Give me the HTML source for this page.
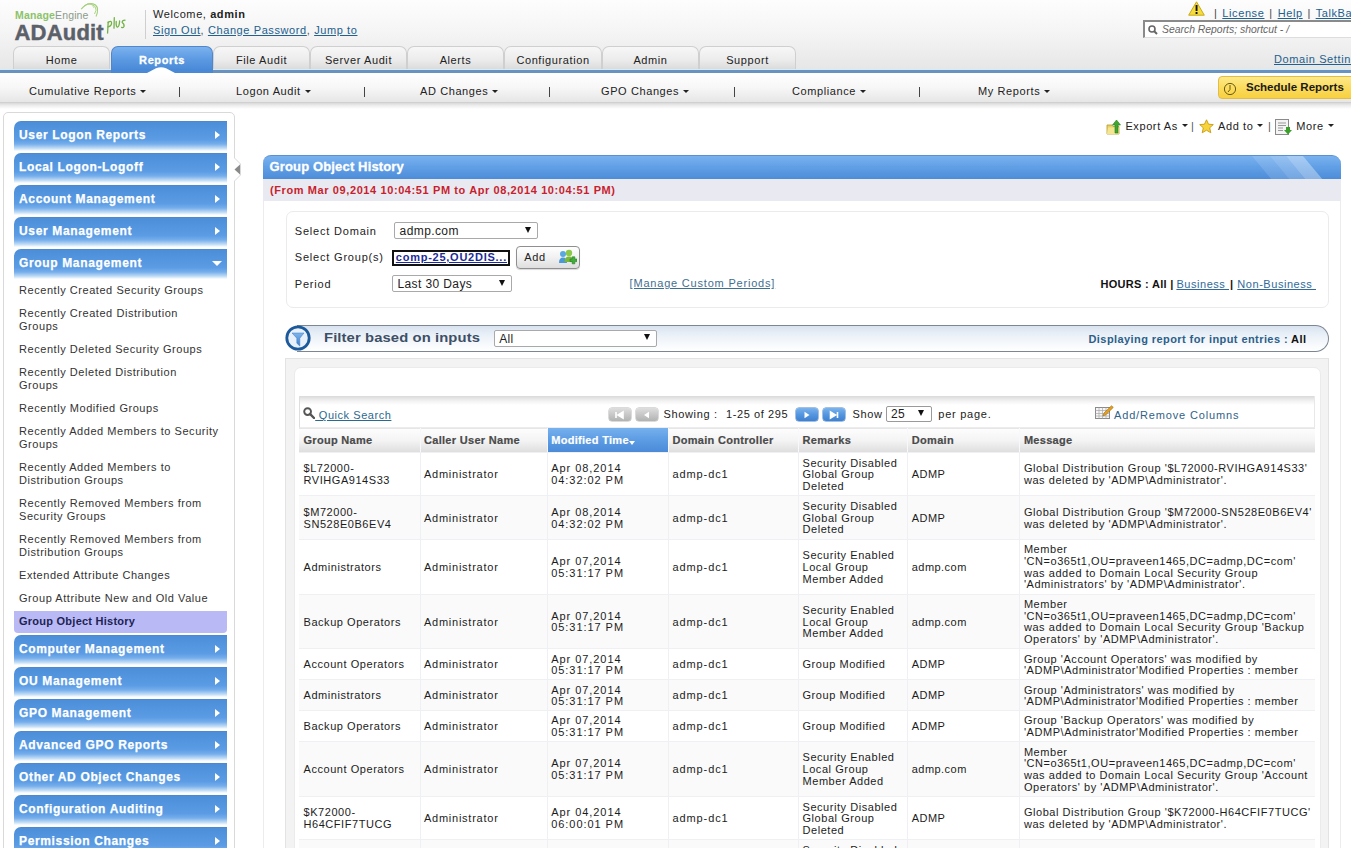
<!DOCTYPE html>
<html><head><meta charset="utf-8">
<style>
*{box-sizing:border-box;}
html,body{margin:0;padding:0;}
body{width:1351px;height:848px;overflow:hidden;position:relative;background:#fff;font-family:"Liberation Sans",sans-serif;color:#222;}
.a{position:absolute;white-space:nowrap;}
.t{position:absolute;white-space:nowrap;font-size:11px;line-height:12px;letter-spacing:0.6px;color:#222;}
.lnk{color:#22608e;text-decoration:underline;}
/* header */
#hdr{position:absolute;left:0;top:0;width:1351px;height:70px;background:linear-gradient(#fdfdfd 0%,#f5f5f5 45%,#e6e6e6 100%);}
#bline{position:absolute;left:0;top:69px;width:1351px;height:4px;background:#6892c0;border-top:1px solid #d4ecf6;}
#sub{position:absolute;left:0;top:73px;width:1351px;height:30px;background:linear-gradient(#ffffff 0%,#f7f7f7 50%,#e6e6e6 100%);border-bottom:1px solid #d0d0d0;}
#subsh{position:absolute;left:0;top:103px;width:1351px;height:6px;background:linear-gradient(#d9d9d9,#ececec 40%,#ffffff);}
.tab{position:absolute;top:46px;height:24px;width:97px;border:1px solid #cfcfcf;border-bottom:none;border-radius:7px 7px 0 0;background:linear-gradient(#f7f7f7 0%,#ececec 55%,#dadada 100%);font-size:11px;line-height:12px;text-align:center;padding-top:7px;color:#222;letter-spacing:0.6px;}
.tab.on{background:linear-gradient(#7cb2ee 0%,#5d9be3 50%,#4a89d6 100%);border-color:#4f86cc;color:#fff;font-weight:bold;height:24px;-webkit-text-stroke:0.3px #fff;}
.sn{position:absolute;top:85px;font-size:11px;line-height:12px;color:#222;letter-spacing:0.6px;white-space:nowrap;}
.car{display:inline-block;width:0;height:0;border-left:3px solid transparent;border-right:3px solid transparent;border-top:3px solid #222;vertical-align:middle;margin-left:4px;position:relative;top:-1px;}
.sep{position:absolute;top:87px;width:1.2px;height:10px;background:#444;}
/* sidebar */
#side{position:absolute;left:3px;top:112px;width:232px;height:760px;border:1px solid #d9d9d9;border-radius:5px 5px 0 0;background:#fff;}
.btn{position:absolute;left:14px;width:213px;height:32px;border-radius:7px 0 0 0;background:linear-gradient(#4a84c8 0px,#4d8ed8 1px,#5496df 35%,#5b9ce4 58%,#76aeeb 72%,#bedbf5 85%,#ffffff 94%,#ffffff 100%);}
.btn span{position:absolute;left:5px;top:8px;font-size:12px;line-height:12px;font-weight:bold;color:#fff;letter-spacing:0.65px;-webkit-text-stroke:0.25px #fff;}
.btn i{position:absolute;left:201px;top:10px;width:0;height:0;border-top:4.5px solid transparent;border-bottom:4.5px solid transparent;border-left:5px solid #fff;}
.btn i.dn{left:198px;top:12px;border-left:5px solid transparent;border-right:5px solid transparent;border-top:5px solid #fff;border-bottom:none;}
.si{position:absolute;left:19px;font-size:11px;line-height:13px;color:#333;letter-spacing:0.55px;white-space:nowrap;}
</style></head>
<body>
<div id="hdr"></div>
<!-- logo -->
<div class="a" style="left:15px;top:9px;font-size:10.5px;line-height:12px;letter-spacing:0.15px;"><span style="color:#8cc36a;font-weight:bold;">Manage</span><span style="color:#8d9b8a;">Engine</span></div>
<svg class="a" style="left:78px;top:0px;" width="24" height="22" viewBox="0 0 24 22"><path d="M3.2 9.2 Q10 1 17.5 5 Q21.5 8.5 18 16.5" stroke="#a3cf78" stroke-width="1.1" fill="none"/><path d="M6 6 Q12 1.8 17 6.5 Q19.5 10 16.5 14" stroke="#a3cf78" stroke-width="0.9" fill="none"/><path d="M9 4 Q14 3 16 8" stroke="#b5d890" stroke-width="0.8" fill="none"/></svg>
<div class="a" style="left:14.5px;top:20.5px;font-size:22px;line-height:24px;font-weight:bold;color:#5b6069;letter-spacing:0.2px;-webkit-text-stroke:0.45px #5b6069;">ADAudit</div>
<svg class="a" style="left:104px;top:15px;" width="24" height="20" viewBox="0 0 24 20"><g stroke="#72b244" stroke-width="1.3" fill="none" stroke-linecap="round"><path d="M4.2 6.8 L3.6 18"/><path d="M4.1 7.5 Q7.5 5.2 7.6 8 Q7.5 11 4 12"/><path d="M10.3 2.6 L10 13.2"/><path d="M12.2 6.5 Q11.8 12.5 13.8 12 Q15.3 11.4 15.6 6"/><path d="M21 5.2 Q18 5.2 18.2 7.5 Q20.5 9 20 11.5 Q19 13.2 17.6 12.4"/></g></svg>
<div class="a" style="left:145px;top:10px;width:1px;height:29px;background:#cfcfcf;"></div>
<div class="t" style="left:153px;top:8px;">Welcome, <b>admin</b></div>
<div class="t" style="left:153px;top:24px;color:#555;"><span class="lnk">Sign Out</span>, <span class="lnk">Change Password</span>, <span class="lnk">Jump to</span></div>

<!-- right header -->
<svg class="a" style="left:1188px;top:1px;" width="17" height="15" viewBox="0 0 17 15"><path d="M8.5 0.8 L16.3 14.2 L0.7 14.2 Z" fill="#f5dc3c" stroke="#c8a818" stroke-width="1" stroke-linejoin="round"/><rect x="7.6" y="4" width="1.9" height="6" fill="#111"/><rect x="7.6" y="11" width="1.9" height="2" fill="#111"/></svg>
<div class="t" style="left:1214px;top:7px;color:#444;word-spacing:1.2px;">| <span class="lnk">License</span> | <span class="lnk">Help</span> | <span class="lnk">TalkBack</span></div>
<div class="a" style="left:1143px;top:20px;width:220px;height:18px;background:#fff;border-top:2px solid #8a8a8a;border-left:2px solid #8a8a8a;border-bottom:1px solid #ddd;"></div>
<svg class="a" style="left:1148px;top:25px;" width="10" height="10" viewBox="0 0 10 10"><circle cx="4" cy="4" r="3" stroke="#666" stroke-width="1.6" fill="none"/><path d="M6 6 L9 9" stroke="#666" stroke-width="2"/></svg>
<div class="t" style="left:1162px;top:23.5px;font-style:italic;color:#666;font-size:10.4px;letter-spacing:0;">Search Reports; shortcut - /</div>
<div class="t lnk" style="left:1274px;top:53px;">Domain Settings</div>

<!-- tabs -->
<div class="tab" style="left:13px;">Home</div>
<div class="tab on" style="left:111px;width:102px;">Reports</div>
<div class="tab" style="left:213px;">File Audit</div>
<div class="tab" style="left:310px;">Server Audit</div>
<div class="tab" style="left:407px;">Alerts</div>
<div class="tab" style="left:504px;width:98px;">Configuration</div>
<div class="tab" style="left:602px;">Admin</div>
<div class="tab" style="left:699px;">Support</div>
<div id="bline"></div>
<div class="a" style="left:111px;width:102px;top:69px;height:4px;background:#4a89d6;border-left:1px solid #4f86cc;border-right:1px solid #4f86cc;"></div>
<svg class="a" style="left:147px;top:67px;" width="28" height="6" viewBox="0 0 28 6"><path d="M0 6 L9 1.2 Q14 -0.8 19 1.2 L28 6 Z" fill="#fff"/></svg>

<!-- subnav -->
<div id="sub"></div>
<div id="subsh"></div>
<div class="sn" style="left:29px;">Cumulative Reports<i class="car"></i></div>
<div class="sep" style="left:179px;"></div>
<div class="sn" style="left:236px;">Logon Audit<i class="car"></i></div>
<div class="sep" style="left:364px;"></div>
<div class="sn" style="left:420px;">AD Changes<i class="car"></i></div>
<div class="sep" style="left:549px;"></div>
<div class="sn" style="left:601px;">GPO Changes<i class="car"></i></div>
<div class="sep" style="left:734px;"></div>
<div class="sn" style="left:792px;">Compliance<i class="car"></i></div>
<div class="sep" style="left:919px;"></div>
<div class="sn" style="left:978px;">My Reports<i class="car"></i></div>
<div class="a" style="left:1218px;top:76px;width:150px;height:23px;border:1px solid #e2bc44;border-radius:4px;background:linear-gradient(#fde98a 0%,#fbdc5e 50%,#f8d040 100%);"></div>
<svg class="a" style="left:1223px;top:82px;" width="14" height="14" viewBox="0 0 14 14"><circle cx="7" cy="7" r="5.6" stroke="#6b5a10" stroke-width="1" fill="none"/><path d="M7 3 L7 7.5 L5 10" stroke="#6b5a10" stroke-width="1" fill="none"/></svg>
<div class="a" style="left:1246px;top:81px;font-size:11.5px;line-height:12px;font-weight:bold;color:#1a1a1a;letter-spacing:0;">Schedule Reports</div>

<!-- sidebar -->
<div id="side"></div>
<div class="btn" style="top:121px;"><span>User Logon Reports</span><i></i></div>
<div class="btn" style="top:153px;"><span>Local Logon-Logoff</span><i></i></div>
<div class="btn" style="top:185px;"><span>Account Management</span><i></i></div>
<div class="btn" style="top:217px;"><span>User Management</span><i></i></div>
<div class="btn" style="top:249px;"><span>Group Management</span><i class="dn"></i></div>
<div class="si" style="top:284.3px;">Recently Created Security Groups</div>
<div class="si" style="top:307.3px;">Recently Created Distribution<br>Groups</div>
<div class="si" style="top:343.3px;">Recently Deleted Security Groups</div>
<div class="si" style="top:366.3px;">Recently Deleted Distribution<br>Groups</div>
<div class="si" style="top:402.3px;">Recently Modified Groups</div>
<div class="si" style="top:425.3px;">Recently Added Members to Security<br>Groups</div>
<div class="si" style="top:461.3px;">Recently Added Members to<br>Distribution Groups</div>
<div class="si" style="top:497.3px;">Recently Removed Members from<br>Security Groups</div>
<div class="si" style="top:533.3px;">Recently Removed Members from<br>Distribution Groups</div>
<div class="si" style="top:569.3px;">Extended Attribute Changes</div>
<div class="si" style="top:592.3px;">Group Attribute New and Old Value</div>
<div class="a" style="left:14px;top:610.5px;width:213px;height:22px;background:#b9b9f6;border-radius:0 0 4px 4px;"></div>
<div class="si" style="top:615.3px;font-weight:bold;color:#1c2352;letter-spacing:0.25px;">Group Object History</div>
<div class="btn" style="top:635px;"><span>Computer Management</span><i></i></div>
<div class="btn" style="top:667px;"><span>OU Management</span><i></i></div>
<div class="btn" style="top:699px;"><span>GPO Management</span><i></i></div>
<div class="btn" style="top:731px;"><span>Advanced GPO Reports</span><i></i></div>
<div class="btn" style="top:763px;"><span>Other AD Object Changes</span><i></i></div>
<div class="btn" style="top:795px;"><span>Configuration Auditing</span><i></i></div>
<div class="btn" style="top:827px;"><span>Permission Changes</span><i></i></div>
<div class="a" style="left:234px;top:157px;width:8px;height:26px;background:#fff;"></div>
<svg class="a" style="left:233px;top:156px;" width="10" height="28" viewBox="0 0 10 28"><path d="M1.5 0 L1.5 2 L7.5 8 L7.5 19 L1.5 25 L1.5 28" stroke="#d9d9d9" stroke-width="1" fill="none"/><path d="M7 8.5 L1.5 13.5 L7 18.5 Z" fill="#8a8a8a"/></svg>

<svg class="a" style="left:1106px;top:119px;" width="16" height="16" viewBox="0 0 16 16"><path d="M1 6 L6 6 L7 7.5 L13 7.5 L13 15 L1 15 Z" fill="#e8d36a" stroke="#b69a2a" stroke-width="0.8"/><path d="M2 8.5 L14 8.5 L12.5 15 L1 15 Z" fill="#f4e590"/><path d="M9 14 L9 6 L6.5 6 L10.5 1 L14.5 6 L12 6 L12 14 Z" fill="#3fa62e" stroke="#2a7a1e" stroke-width="0.6"/></svg>
<div class="a" style="left:1125.4px;top:119.59px;font-size:11px;line-height:12px;letter-spacing:0.6px;color:#222;font-weight:normal;">Export As<i class="car"></i></div>
<div class="a" style="left:1191px;top:120.19px;font-size:11px;line-height:12px;letter-spacing:0px;color:#555;font-weight:normal;">|</div>
<svg class="a" style="left:1199px;top:119px;" width="15" height="15" viewBox="0 0 15 15"><path d="M7.5 0.8 L9.5 5.2 L14.3 5.6 L10.7 8.8 L11.8 13.8 L7.5 11.2 L3.2 13.8 L4.3 8.8 L0.7 5.6 L5.5 5.2 Z" fill="#f7d43a" stroke="#c79a12" stroke-width="0.9" stroke-linejoin="round"/></svg>
<div class="a" style="left:1218px;top:119.59px;font-size:11px;line-height:12px;letter-spacing:0.6px;color:#222;font-weight:normal;">Add to<i class="car"></i></div>
<div class="a" style="left:1268px;top:120.19px;font-size:11px;line-height:12px;letter-spacing:0px;color:#555;font-weight:normal;">|</div>
<svg class="a" style="left:1275px;top:119px;" width="17" height="16" viewBox="0 0 17 16"><rect x="0.5" y="0.5" width="13" height="15" fill="#f4f4f4" stroke="#8a8a8a"/><path d="M3 4 H11 M3 6.5 H11 M3 9 H8 M3 11.5 H8" stroke="#999" stroke-width="1"/><path d="M11 8 H15 V11 H17 L13 15.5 L9 11 H11 Z" fill="#3aa02a"/></svg>
<div class="a" style="left:1296.3px;top:119.59px;font-size:11px;line-height:12px;letter-spacing:0.6px;color:#222;font-weight:normal;">More<i class="car"></i></div>
<div class="a" style="left:263px;top:170px;width:1px;height:700px;background:#ececec;"></div>
<div class="a" style="left:1340px;top:170px;width:1px;height:700px;background:#ececec;"></div>
<div class="a" style="left:263px;top:155px;width:1078px;height:24px;border-radius:8px 9px 0 0;border-top:1px solid #5b90d2;background:linear-gradient(#7ab2ef 0%,#62a0e6 45%,#4d8dd8 100%);overflow:hidden;"><svg style="position:absolute;left:0;top:0;" width="1078" height="24"><path d="M989 0 L1007 0 L1027 24 L1009 24 Z" fill="#ffffff" fill-opacity="0.13"/><path d="M1007 0 L1023 0 L1043 24 L1027 24 Z" fill="#ffffff" fill-opacity="0.22"/><path d="M1023 0 L1040 0 L1060 24 L1043 24 Z" fill="#ffffff" fill-opacity="0.35"/></svg></div>
<div class="a" style="left:269.5px;top:160.10px;font-size:13px;line-height:14px;letter-spacing:0.15px;color:#fff;font-weight:bold;-webkit-text-stroke:0.3px #fff;">Group Object History</div>
<div class="a" style="left:263px;top:179px;width:1078px;height:22px;background:#e9eaf1;"></div>
<div class="a" style="left:270px;top:184.19px;font-size:11px;line-height:12px;letter-spacing:0.6px;color:#c81e2e;font-weight:bold;">(From Mar 09,2014 10:04:51 PM to Apr 08,2014 10:04:51 PM)</div>
<div class="a" style="left:286px;top:211px;width:1043px;height:97px;border:1px solid #ebebeb;border-radius:7px;background:#fff;"></div>
<div class="a" style="left:294.8px;top:225.19px;font-size:11px;line-height:12px;letter-spacing:0.8px;color:#222;font-weight:normal;">Select Domain</div>
<div class="a" style="left:394px;top:222px;width:144px;height:17px;border:1px solid #a9a9a9;border-radius:2px;background:#fff;"></div>
<div class="a" style="left:399.6px;top:224.84px;font-size:12px;line-height:12px;letter-spacing:0.4px;color:#222;font-weight:normal;">admp.com</div>
<div class="a" style="left:525px;top:227px;width:0;height:0;border-left:3.5px solid transparent;border-right:3.5px solid transparent;border-top:6px solid #111;"></div>
<div class="a" style="left:294.8px;top:251.19px;font-size:11px;line-height:12px;letter-spacing:0.8px;color:#222;font-weight:normal;">Select Group(s)</div>
<div class="a" style="left:392px;top:250px;width:118px;height:16px;border:2px solid #111;background:#fff;"></div>
<div class="a" style="left:395.8px;top:251.19px;font-size:11px;line-height:12px;letter-spacing:0.75px;color:#1b2a9a;font-weight:bold;text-decoration:underline;">comp-25,OU2DIS...</div>
<div class="a" style="left:516px;top:245.5px;width:64px;height:23px;border:1px solid #8f8f8f;border-radius:4px;background:linear-gradient(#ffffff 0%,#f1f1f1 50%,#dedede 100%);box-shadow:0 1px 1px rgba(0,0,0,0.15);"></div>
<div class="a" style="left:524.2px;top:250.89px;font-size:11px;line-height:12px;letter-spacing:0.7px;color:#222;font-weight:normal;">Add</div>
<svg class="a" style="left:558px;top:249px;" width="19" height="17" viewBox="0 0 19 17"><circle cx="5" cy="5" r="3" fill="#5aa8e0"/><path d="M1 14 Q1 8.5 5 8.5 Q9 8.5 9 14 Z" fill="#4a98d8"/><circle cx="11" cy="4" r="3.2" fill="#8cc84a"/><path d="M6.5 13 Q6.5 7.5 11 7.5 Q15.5 7.5 15.5 13 Z" fill="#7ab83a"/><path d="M12 10 H14.2 V7.8 H16.8 V10 H19 V12.6 H16.8 V14.8 H14.2 V12.6 H12 Z" fill="#3fae3a" stroke="#2a7a22" stroke-width="0.6"/></svg>
<div class="a" style="left:294.8px;top:277.79px;font-size:11px;line-height:12px;letter-spacing:0.8px;color:#222;font-weight:normal;">Period</div>
<div class="a" style="left:392px;top:275px;width:120px;height:17px;border:1px solid #a9a9a9;border-radius:2px;background:#fff;"></div>
<div class="a" style="left:397.4px;top:277.54px;font-size:12px;line-height:12px;letter-spacing:0.4px;color:#222;font-weight:normal;">Last 30 Days</div>
<div class="a" style="left:499px;top:280px;width:0;height:0;border-left:3.5px solid transparent;border-right:3.5px solid transparent;border-top:6px solid #111;"></div>
<div class="a" style="left:629.6px;top:277.19px;font-size:11px;line-height:12px;letter-spacing:0.8px;color:#3f6f90;font-weight:normal;text-decoration:underline;">[Manage Custom Periods]</div>
<div class="a" style="left:1100.4px;top:277.79px;font-size:11px;line-height:12px;letter-spacing:0.3px;color:#111;font-weight:bold;">HOURS : All |</div>
<div class="a" style="left:1176.4px;top:277.79px;font-size:11px;line-height:12px;letter-spacing:0.55px;color:#2f6a9a;font-weight:normal;"><span style="text-decoration:underline;">Business&nbsp;</span></div>
<div class="a" style="left:1230px;top:277.79px;font-size:11px;line-height:12px;letter-spacing:0px;color:#111;font-weight:bold;">|</div>
<div class="a" style="left:1237.3px;top:277.79px;font-size:11px;line-height:12px;letter-spacing:0.55px;color:#2f6a9a;font-weight:normal;"><span style="text-decoration:underline;">Non-Business&nbsp;</span></div>
<div class="a" style="left:297px;top:325px;width:1032px;height:27px;border:1px solid #7d8793;border-left:none;border-radius:0 14px 14px 0;background:linear-gradient(#d8e3f0 0%,#eef3f9 45%,#ffffff 100%);"></div>
<svg class="a" style="left:285px;top:325px;" width="27" height="27" viewBox="0 0 27 27"><defs><linearGradient id="fg" x1="0" y1="0" x2="0" y2="1"><stop offset="0" stop-color="#7fb6ee"/><stop offset="1" stop-color="#3c7fcf"/></linearGradient></defs><circle cx="13" cy="13" r="11.2" fill="#e8f1fb" stroke="#1d5a9c" stroke-width="2.8"/><path d="M7 8 L19 8 L14.8 13.2 L14.8 21 L11.8 18.2 L11.8 13.2 Z" fill="url(#fg)" stroke="#3a78c0" stroke-width="0.5"/></svg>
<div class="a" style="left:323.9px;top:331.32px;font-size:13.5px;line-height:14px;letter-spacing:0.1px;color:#3d4f66;font-weight:bold;transform:scaleX(1.095);transform-origin:0 0;">Filter based on inputs</div>
<div class="a" style="left:494px;top:330px;width:163px;height:17px;border:1px solid #a9a9a9;border-radius:2px;background:#fff;"></div>
<div class="a" style="left:499.2px;top:332.84px;font-size:12px;line-height:12px;letter-spacing:0.3px;color:#222;font-weight:normal;">All</div>
<div class="a" style="left:644px;top:334px;width:0;height:0;border-left:3.5px solid transparent;border-right:3.5px solid transparent;border-top:6px solid #111;"></div>
<div class="a" style="left:1088.5px;top:332.69px;font-size:11px;line-height:12px;letter-spacing:0.42px;color:#2b5f8a;font-weight:bold;">Displaying report for input entries : <span style="color:#111;">All</span></div>
<div class="a" style="left:285px;top:358px;width:1044px;height:520px;border:1px solid #e3e3e3;background:#f3f3f3;"></div>
<div class="a" style="left:293.5px;top:367px;width:1027px;height:520px;border:1px solid #ebebeb;border-radius:7px;background:#fff;"></div>
<div class="a" style="left:299px;top:396px;width:1016px;height:32px;border-left:1px solid #dedede;border-right:1px solid #e8e8e8;background:linear-gradient(#dadada 0px,#f2f2f2 5px,#ffffff 9px,#ffffff 100%);border-bottom:1px solid #ececec;"></div>
<svg class="a" style="left:303px;top:407px;" width="12" height="12" viewBox="0 0 12 12"><circle cx="4.6" cy="4.6" r="3.4" stroke="#555" stroke-width="1.9" fill="none"/><path d="M7.2 7.2 L11 11" stroke="#555" stroke-width="2.4" stroke-linecap="round"/></svg>
<div class="a" style="left:315.2px;top:409.49px;font-size:11px;line-height:12px;letter-spacing:0.55px;color:#2a6a8e;font-weight:normal;"><span style="text-decoration:underline;">&nbsp;Quick Search</span></div>
<div class="a" style="left:609.2px;top:407.5px;width:21.5px;height:13px;border-radius:3px;background:linear-gradient(#dedede 0%,#c8c8c8 50%,#b2b2b2 100%);box-shadow:0 0 0 0.5px #b8b8b8;"><svg style="position:absolute;left:0;top:0;" width="22" height="14"><path d="M7 4 V10 M14 4 L9 7 L14 10 Z" stroke="#fff" stroke-width="1.6" fill="#fff"/></svg></div>
<div class="a" style="left:636.2px;top:407.5px;width:21.5px;height:13px;border-radius:3px;background:linear-gradient(#dedede 0%,#c8c8c8 50%,#b2b2b2 100%);box-shadow:0 0 0 0.5px #b8b8b8;"><svg style="position:absolute;left:0;top:0;" width="22" height="14"><path d="M13 3.8 L8 7 L13 10.2 Z" fill="#fff"/></svg></div>
<div class="a" style="left:663.5px;top:407.89px;font-size:11px;line-height:12px;letter-spacing:0.65px;color:#222;font-weight:normal;">Showing :</div>
<div class="a" style="left:726px;top:407.89px;font-size:11px;line-height:12px;letter-spacing:0.6px;color:#222;font-weight:normal;">1-25 of 295</div>
<div class="a" style="left:796.3px;top:407.5px;width:21.5px;height:13px;border-radius:3px;background:linear-gradient(#7ab3ec 0%,#5596e0 50%,#3f80d0 100%);box-shadow:0 0 0 0.5px #4a80c0;"><svg style="position:absolute;left:0;top:0;" width="22" height="14"><path d="M8.5 3.8 L13.5 7 L8.5 10.2 Z" fill="#fff"/></svg></div>
<div class="a" style="left:823.3px;top:407.5px;width:21.5px;height:13px;border-radius:3px;background:linear-gradient(#7ab3ec 0%,#5596e0 50%,#3f80d0 100%);box-shadow:0 0 0 0.5px #4a80c0;"><svg style="position:absolute;left:0;top:0;" width="22" height="14"><path d="M14.5 4 V10 M7.5 4 L12.5 7 L7.5 10 Z" stroke="#fff" stroke-width="1.6" fill="#fff"/></svg></div>
<div class="a" style="left:852.6px;top:408.19px;font-size:11px;line-height:12px;letter-spacing:0.65px;color:#222;font-weight:normal;">Show</div>
<div class="a" style="left:886px;top:405.5px;width:46px;height:16.5px;border:1px solid #9a9a9a;border-radius:2px;background:#fff;"></div>
<div class="a" style="left:891px;top:407.84px;font-size:12px;line-height:12px;letter-spacing:0.3px;color:#222;font-weight:normal;">25</div>
<div class="a" style="left:918px;top:409.5px;width:0;height:0;border-left:3.5px solid transparent;border-right:3.5px solid transparent;border-top:6px solid #111;"></div>
<div class="a" style="left:938.3px;top:408.49px;font-size:11px;line-height:12px;letter-spacing:0.75px;color:#222;font-weight:normal;">per page.</div>
<svg class="a" style="left:1095px;top:405px;" width="19" height="14" viewBox="0 0 19 14"><rect x="0.5" y="2.5" width="14" height="11" fill="#f6f6f6" stroke="#8a8a8a"/><path d="M0.5 5.5 H14.5 M4 2.5 V13.5 M7.5 2.5 V13.5 M11 2.5 V13.5 M0.5 8.5 H14.5 M0.5 11 H14.5" stroke="#a8a8a8" stroke-width="0.7"/><path d="M8 11 L9 8 L16.5 0.8 L18.3 2.4 L10.8 9.8 Z" fill="#e8a020" stroke="#9a6a10" stroke-width="0.6"/></svg>
<div class="a" style="left:1114px;top:409.19px;font-size:11px;line-height:12px;letter-spacing:0.85px;color:#2f6288;font-weight:normal;">Add/Remove Columns</div>
<div class="a" style="left:299px;top:427.5px;width:1016px;height:24.5px;background:linear-gradient(#fdfdfd 0%,#f4f4f4 50%,#dedede 100%);border-top:1px solid #e6e6e6;"></div>
<div class="a" style="left:546.7px;top:427.5px;width:121.3px;height:24.5px;background:linear-gradient(#76b0ee 0%,#5c9ce4 50%,#4a8ad8 100%);"></div>
<div class="a" style="left:303.5px;top:433.69px;font-size:11px;line-height:12px;letter-spacing:0.3px;color:#4a4a4a;font-weight:bold;-webkit-text-stroke:0.2px #4a4a4a;">Group Name</div>
<div class="a" style="left:419.5px;top:428px;width:1px;height:24px;background:#f8f8fc;"></div>
<div class="a" style="left:424.0px;top:433.69px;font-size:11px;line-height:12px;letter-spacing:0.3px;color:#4a4a4a;font-weight:bold;-webkit-text-stroke:0.2px #4a4a4a;">Caller User Name</div>
<div class="a" style="left:546.7px;top:428px;width:1px;height:24px;background:#f8f8fc;"></div>
<div class="a" style="left:551.2px;top:433.69px;font-size:11px;line-height:12px;letter-spacing:0.3px;color:#fff;font-weight:bold;-webkit-text-stroke:0.2px #fff;">Modified Time<span style="display:inline-block;width:0;height:0;border-left:3.5px solid transparent;border-right:3.5px solid transparent;border-top:4px solid #fff;margin-left:0px;vertical-align:-1px;"></span></div>
<div class="a" style="left:668px;top:428px;width:1px;height:24px;background:#f8f8fc;"></div>
<div class="a" style="left:672.5px;top:433.69px;font-size:11px;line-height:12px;letter-spacing:0.3px;color:#4a4a4a;font-weight:bold;-webkit-text-stroke:0.2px #4a4a4a;">Domain Controller</div>
<div class="a" style="left:798px;top:428px;width:1px;height:24px;background:#f8f8fc;"></div>
<div class="a" style="left:802.5px;top:433.69px;font-size:11px;line-height:12px;letter-spacing:0.3px;color:#4a4a4a;font-weight:bold;-webkit-text-stroke:0.2px #4a4a4a;">Remarks</div>
<div class="a" style="left:907.3px;top:428px;width:1px;height:24px;background:#f8f8fc;"></div>
<div class="a" style="left:911.8px;top:433.69px;font-size:11px;line-height:12px;letter-spacing:0.3px;color:#4a4a4a;font-weight:bold;-webkit-text-stroke:0.2px #4a4a4a;">Domain</div>
<div class="a" style="left:1019.4px;top:428px;width:1px;height:24px;background:#f8f8fc;"></div>
<div class="a" style="left:1023.9px;top:433.69px;font-size:11px;line-height:12px;letter-spacing:0.3px;color:#4a4a4a;font-weight:bold;-webkit-text-stroke:0.2px #4a4a4a;">Message</div>
<div class="a" style="left:299px;top:452.00px;width:1016px;height:43.40px;background:#ffffff;border-top:1px solid #eef0f3;"></div>
<div class="a" style="left:419.5px;top:452.00px;width:1px;height:43.40px;background:#eef0f4;"></div>
<div class="a" style="left:546.7px;top:452.00px;width:1px;height:43.40px;background:#eef0f4;"></div>
<div class="a" style="left:668px;top:452.00px;width:1px;height:43.40px;background:#eef0f4;"></div>
<div class="a" style="left:798px;top:452.00px;width:1px;height:43.40px;background:#eef0f4;"></div>
<div class="a" style="left:907.3px;top:452.00px;width:1px;height:43.40px;background:#eef0f4;"></div>
<div class="a" style="left:1019.4px;top:452.00px;width:1px;height:43.40px;background:#eef0f4;"></div>
<div class="a" style="left:303.5px;top:462.49px;font-size:11px;line-height:12px;letter-spacing:0.55px;color:#1c1c1c;font-weight:normal;">$L72000-</div>
<div class="a" style="left:303.5px;top:474.19px;font-size:11px;line-height:12px;letter-spacing:0.55px;color:#1c1c1c;font-weight:normal;">RVIHGA914S33</div>
<div class="a" style="left:424.0px;top:468.34px;font-size:11px;line-height:12px;letter-spacing:0.75px;color:#1c1c1c;font-weight:normal;">Administrator</div>
<div class="a" style="left:551.2px;top:462.49px;font-size:11px;line-height:12px;letter-spacing:0.95px;color:#1c1c1c;font-weight:normal;">Apr 08,2014</div>
<div class="a" style="left:551.2px;top:474.19px;font-size:11px;line-height:12px;letter-spacing:0.95px;color:#1c1c1c;font-weight:normal;">04:32:02 PM</div>
<div class="a" style="left:672.5px;top:468.34px;font-size:11px;line-height:12px;letter-spacing:0.9px;color:#1c1c1c;font-weight:normal;">admp-dc1</div>
<div class="a" style="left:802.5px;top:456.64px;font-size:11px;line-height:12px;letter-spacing:0.55px;color:#1c1c1c;font-weight:normal;">Security Disabled</div>
<div class="a" style="left:802.5px;top:468.34px;font-size:11px;line-height:12px;letter-spacing:0.55px;color:#1c1c1c;font-weight:normal;">Global Group</div>
<div class="a" style="left:802.5px;top:480.04px;font-size:11px;line-height:12px;letter-spacing:0.55px;color:#1c1c1c;font-weight:normal;">Deleted</div>
<div class="a" style="left:911.8px;top:468.34px;font-size:11px;line-height:12px;letter-spacing:0.45px;color:#1c1c1c;font-weight:normal;">ADMP</div>
<div class="a" style="left:1023.9px;top:462.49px;font-size:11px;line-height:12px;letter-spacing:0.55px;color:#1c1c1c;font-weight:normal;">Global Distribution Group &#39;$L72000-RVIHGA914S33&#39;</div>
<div class="a" style="left:1023.9px;top:474.19px;font-size:11px;line-height:12px;letter-spacing:0.55px;color:#1c1c1c;font-weight:normal;">was deleted by &#39;ADMP\Administrator&#39;.</div>
<div class="a" style="left:299px;top:495.40px;width:1016px;height:43.40px;background:#fafafa;border-top:1px solid #eef0f3;"></div>
<div class="a" style="left:419.5px;top:495.40px;width:1px;height:43.40px;background:#eef0f4;"></div>
<div class="a" style="left:546.7px;top:495.40px;width:1px;height:43.40px;background:#eef0f4;"></div>
<div class="a" style="left:668px;top:495.40px;width:1px;height:43.40px;background:#eef0f4;"></div>
<div class="a" style="left:798px;top:495.40px;width:1px;height:43.40px;background:#eef0f4;"></div>
<div class="a" style="left:907.3px;top:495.40px;width:1px;height:43.40px;background:#eef0f4;"></div>
<div class="a" style="left:1019.4px;top:495.40px;width:1px;height:43.40px;background:#eef0f4;"></div>
<div class="a" style="left:303.5px;top:505.89px;font-size:11px;line-height:12px;letter-spacing:0.55px;color:#1c1c1c;font-weight:normal;">$M72000-</div>
<div class="a" style="left:303.5px;top:517.59px;font-size:11px;line-height:12px;letter-spacing:0.55px;color:#1c1c1c;font-weight:normal;">SN528E0B6EV4</div>
<div class="a" style="left:424.0px;top:511.74px;font-size:11px;line-height:12px;letter-spacing:0.75px;color:#1c1c1c;font-weight:normal;">Administrator</div>
<div class="a" style="left:551.2px;top:505.89px;font-size:11px;line-height:12px;letter-spacing:0.95px;color:#1c1c1c;font-weight:normal;">Apr 08,2014</div>
<div class="a" style="left:551.2px;top:517.59px;font-size:11px;line-height:12px;letter-spacing:0.95px;color:#1c1c1c;font-weight:normal;">04:32:02 PM</div>
<div class="a" style="left:672.5px;top:511.74px;font-size:11px;line-height:12px;letter-spacing:0.9px;color:#1c1c1c;font-weight:normal;">admp-dc1</div>
<div class="a" style="left:802.5px;top:500.04px;font-size:11px;line-height:12px;letter-spacing:0.55px;color:#1c1c1c;font-weight:normal;">Security Disabled</div>
<div class="a" style="left:802.5px;top:511.74px;font-size:11px;line-height:12px;letter-spacing:0.55px;color:#1c1c1c;font-weight:normal;">Global Group</div>
<div class="a" style="left:802.5px;top:523.44px;font-size:11px;line-height:12px;letter-spacing:0.55px;color:#1c1c1c;font-weight:normal;">Deleted</div>
<div class="a" style="left:911.8px;top:511.74px;font-size:11px;line-height:12px;letter-spacing:0.45px;color:#1c1c1c;font-weight:normal;">ADMP</div>
<div class="a" style="left:1023.9px;top:505.89px;font-size:11px;line-height:12px;letter-spacing:0.55px;color:#1c1c1c;font-weight:normal;">Global Distribution Group &#39;$M72000-SN528E0B6EV4&#39;</div>
<div class="a" style="left:1023.9px;top:517.59px;font-size:11px;line-height:12px;letter-spacing:0.55px;color:#1c1c1c;font-weight:normal;">was deleted by &#39;ADMP\Administrator&#39;.</div>
<div class="a" style="left:299px;top:538.80px;width:1016px;height:54.80px;background:#ffffff;border-top:1px solid #eef0f3;"></div>
<div class="a" style="left:419.5px;top:538.80px;width:1px;height:54.80px;background:#eef0f4;"></div>
<div class="a" style="left:546.7px;top:538.80px;width:1px;height:54.80px;background:#eef0f4;"></div>
<div class="a" style="left:668px;top:538.80px;width:1px;height:54.80px;background:#eef0f4;"></div>
<div class="a" style="left:798px;top:538.80px;width:1px;height:54.80px;background:#eef0f4;"></div>
<div class="a" style="left:907.3px;top:538.80px;width:1px;height:54.80px;background:#eef0f4;"></div>
<div class="a" style="left:1019.4px;top:538.80px;width:1px;height:54.80px;background:#eef0f4;"></div>
<div class="a" style="left:303.5px;top:560.84px;font-size:11px;line-height:12px;letter-spacing:0.55px;color:#1c1c1c;font-weight:normal;">Administrators</div>
<div class="a" style="left:424.0px;top:560.84px;font-size:11px;line-height:12px;letter-spacing:0.75px;color:#1c1c1c;font-weight:normal;">Administrator</div>
<div class="a" style="left:551.2px;top:554.99px;font-size:11px;line-height:12px;letter-spacing:0.95px;color:#1c1c1c;font-weight:normal;">Apr 07,2014</div>
<div class="a" style="left:551.2px;top:566.69px;font-size:11px;line-height:12px;letter-spacing:0.95px;color:#1c1c1c;font-weight:normal;">05:31:17 PM</div>
<div class="a" style="left:672.5px;top:560.84px;font-size:11px;line-height:12px;letter-spacing:0.9px;color:#1c1c1c;font-weight:normal;">admp-dc1</div>
<div class="a" style="left:802.5px;top:549.14px;font-size:11px;line-height:12px;letter-spacing:0.55px;color:#1c1c1c;font-weight:normal;">Security Enabled</div>
<div class="a" style="left:802.5px;top:560.84px;font-size:11px;line-height:12px;letter-spacing:0.55px;color:#1c1c1c;font-weight:normal;">Local Group</div>
<div class="a" style="left:802.5px;top:572.54px;font-size:11px;line-height:12px;letter-spacing:0.55px;color:#1c1c1c;font-weight:normal;">Member Added</div>
<div class="a" style="left:911.8px;top:560.84px;font-size:11px;line-height:12px;letter-spacing:0.45px;color:#1c1c1c;font-weight:normal;">admp.com</div>
<div class="a" style="left:1023.9px;top:543.29px;font-size:11px;line-height:12px;letter-spacing:0.55px;color:#1c1c1c;font-weight:normal;">Member</div>
<div class="a" style="left:1023.9px;top:554.99px;font-size:11px;line-height:12px;letter-spacing:0.55px;color:#1c1c1c;font-weight:normal;">&#39;CN=o365t1,OU=praveen1465,DC=admp,DC=com&#39;</div>
<div class="a" style="left:1023.9px;top:566.69px;font-size:11px;line-height:12px;letter-spacing:0.55px;color:#1c1c1c;font-weight:normal;">was added to Domain Local Security Group</div>
<div class="a" style="left:1023.9px;top:578.39px;font-size:11px;line-height:12px;letter-spacing:0.55px;color:#1c1c1c;font-weight:normal;">&#39;Administrators&#39; by &#39;ADMP\Administrator&#39;.</div>
<div class="a" style="left:299px;top:593.60px;width:1016px;height:54.80px;background:#fafafa;border-top:1px solid #eef0f3;"></div>
<div class="a" style="left:419.5px;top:593.60px;width:1px;height:54.80px;background:#eef0f4;"></div>
<div class="a" style="left:546.7px;top:593.60px;width:1px;height:54.80px;background:#eef0f4;"></div>
<div class="a" style="left:668px;top:593.60px;width:1px;height:54.80px;background:#eef0f4;"></div>
<div class="a" style="left:798px;top:593.60px;width:1px;height:54.80px;background:#eef0f4;"></div>
<div class="a" style="left:907.3px;top:593.60px;width:1px;height:54.80px;background:#eef0f4;"></div>
<div class="a" style="left:1019.4px;top:593.60px;width:1px;height:54.80px;background:#eef0f4;"></div>
<div class="a" style="left:303.5px;top:615.64px;font-size:11px;line-height:12px;letter-spacing:0.55px;color:#1c1c1c;font-weight:normal;">Backup Operators</div>
<div class="a" style="left:424.0px;top:615.64px;font-size:11px;line-height:12px;letter-spacing:0.75px;color:#1c1c1c;font-weight:normal;">Administrator</div>
<div class="a" style="left:551.2px;top:609.79px;font-size:11px;line-height:12px;letter-spacing:0.95px;color:#1c1c1c;font-weight:normal;">Apr 07,2014</div>
<div class="a" style="left:551.2px;top:621.49px;font-size:11px;line-height:12px;letter-spacing:0.95px;color:#1c1c1c;font-weight:normal;">05:31:17 PM</div>
<div class="a" style="left:672.5px;top:615.64px;font-size:11px;line-height:12px;letter-spacing:0.9px;color:#1c1c1c;font-weight:normal;">admp-dc1</div>
<div class="a" style="left:802.5px;top:603.94px;font-size:11px;line-height:12px;letter-spacing:0.55px;color:#1c1c1c;font-weight:normal;">Security Enabled</div>
<div class="a" style="left:802.5px;top:615.64px;font-size:11px;line-height:12px;letter-spacing:0.55px;color:#1c1c1c;font-weight:normal;">Local Group</div>
<div class="a" style="left:802.5px;top:627.34px;font-size:11px;line-height:12px;letter-spacing:0.55px;color:#1c1c1c;font-weight:normal;">Member Added</div>
<div class="a" style="left:911.8px;top:615.64px;font-size:11px;line-height:12px;letter-spacing:0.45px;color:#1c1c1c;font-weight:normal;">admp.com</div>
<div class="a" style="left:1023.9px;top:598.09px;font-size:11px;line-height:12px;letter-spacing:0.55px;color:#1c1c1c;font-weight:normal;">Member</div>
<div class="a" style="left:1023.9px;top:609.79px;font-size:11px;line-height:12px;letter-spacing:0.55px;color:#1c1c1c;font-weight:normal;">&#39;CN=o365t1,OU=praveen1465,DC=admp,DC=com&#39;</div>
<div class="a" style="left:1023.9px;top:621.49px;font-size:11px;line-height:12px;letter-spacing:0.55px;color:#1c1c1c;font-weight:normal;">was added to Domain Local Security Group &#39;Backup</div>
<div class="a" style="left:1023.9px;top:633.19px;font-size:11px;line-height:12px;letter-spacing:0.55px;color:#1c1c1c;font-weight:normal;">Operators&#39; by &#39;ADMP\Administrator&#39;.</div>
<div class="a" style="left:299px;top:648.40px;width:1016px;height:30.90px;background:#ffffff;border-top:1px solid #eef0f3;"></div>
<div class="a" style="left:419.5px;top:648.40px;width:1px;height:30.90px;background:#eef0f4;"></div>
<div class="a" style="left:546.7px;top:648.40px;width:1px;height:30.90px;background:#eef0f4;"></div>
<div class="a" style="left:668px;top:648.40px;width:1px;height:30.90px;background:#eef0f4;"></div>
<div class="a" style="left:798px;top:648.40px;width:1px;height:30.90px;background:#eef0f4;"></div>
<div class="a" style="left:907.3px;top:648.40px;width:1px;height:30.90px;background:#eef0f4;"></div>
<div class="a" style="left:1019.4px;top:648.40px;width:1px;height:30.90px;background:#eef0f4;"></div>
<div class="a" style="left:303.5px;top:658.49px;font-size:11px;line-height:12px;letter-spacing:0.55px;color:#1c1c1c;font-weight:normal;">Account Operators</div>
<div class="a" style="left:424.0px;top:658.49px;font-size:11px;line-height:12px;letter-spacing:0.75px;color:#1c1c1c;font-weight:normal;">Administrator</div>
<div class="a" style="left:551.2px;top:652.64px;font-size:11px;line-height:12px;letter-spacing:0.95px;color:#1c1c1c;font-weight:normal;">Apr 07,2014</div>
<div class="a" style="left:551.2px;top:664.34px;font-size:11px;line-height:12px;letter-spacing:0.95px;color:#1c1c1c;font-weight:normal;">05:31:17 PM</div>
<div class="a" style="left:672.5px;top:658.49px;font-size:11px;line-height:12px;letter-spacing:0.9px;color:#1c1c1c;font-weight:normal;">admp-dc1</div>
<div class="a" style="left:802.5px;top:658.49px;font-size:11px;line-height:12px;letter-spacing:0.55px;color:#1c1c1c;font-weight:normal;">Group Modified</div>
<div class="a" style="left:911.8px;top:658.49px;font-size:11px;line-height:12px;letter-spacing:0.45px;color:#1c1c1c;font-weight:normal;">ADMP</div>
<div class="a" style="left:1023.9px;top:652.64px;font-size:11px;line-height:12px;letter-spacing:0.55px;color:#1c1c1c;font-weight:normal;">Group &#39;Account Operators&#39; was modified by</div>
<div class="a" style="left:1023.9px;top:664.34px;font-size:11px;line-height:12px;letter-spacing:0.55px;color:#1c1c1c;font-weight:normal;">&#39;ADMP\Administrator&#39;Modified Properties : member</div>
<div class="a" style="left:299px;top:679.30px;width:1016px;height:30.90px;background:#fafafa;border-top:1px solid #eef0f3;"></div>
<div class="a" style="left:419.5px;top:679.30px;width:1px;height:30.90px;background:#eef0f4;"></div>
<div class="a" style="left:546.7px;top:679.30px;width:1px;height:30.90px;background:#eef0f4;"></div>
<div class="a" style="left:668px;top:679.30px;width:1px;height:30.90px;background:#eef0f4;"></div>
<div class="a" style="left:798px;top:679.30px;width:1px;height:30.90px;background:#eef0f4;"></div>
<div class="a" style="left:907.3px;top:679.30px;width:1px;height:30.90px;background:#eef0f4;"></div>
<div class="a" style="left:1019.4px;top:679.30px;width:1px;height:30.90px;background:#eef0f4;"></div>
<div class="a" style="left:303.5px;top:689.39px;font-size:11px;line-height:12px;letter-spacing:0.55px;color:#1c1c1c;font-weight:normal;">Administrators</div>
<div class="a" style="left:424.0px;top:689.39px;font-size:11px;line-height:12px;letter-spacing:0.75px;color:#1c1c1c;font-weight:normal;">Administrator</div>
<div class="a" style="left:551.2px;top:683.54px;font-size:11px;line-height:12px;letter-spacing:0.95px;color:#1c1c1c;font-weight:normal;">Apr 07,2014</div>
<div class="a" style="left:551.2px;top:695.24px;font-size:11px;line-height:12px;letter-spacing:0.95px;color:#1c1c1c;font-weight:normal;">05:31:17 PM</div>
<div class="a" style="left:672.5px;top:689.39px;font-size:11px;line-height:12px;letter-spacing:0.9px;color:#1c1c1c;font-weight:normal;">admp-dc1</div>
<div class="a" style="left:802.5px;top:689.39px;font-size:11px;line-height:12px;letter-spacing:0.55px;color:#1c1c1c;font-weight:normal;">Group Modified</div>
<div class="a" style="left:911.8px;top:689.39px;font-size:11px;line-height:12px;letter-spacing:0.45px;color:#1c1c1c;font-weight:normal;">ADMP</div>
<div class="a" style="left:1023.9px;top:683.54px;font-size:11px;line-height:12px;letter-spacing:0.55px;color:#1c1c1c;font-weight:normal;">Group &#39;Administrators&#39; was modified by</div>
<div class="a" style="left:1023.9px;top:695.24px;font-size:11px;line-height:12px;letter-spacing:0.55px;color:#1c1c1c;font-weight:normal;">&#39;ADMP\Administrator&#39;Modified Properties : member</div>
<div class="a" style="left:299px;top:710.20px;width:1016px;height:30.90px;background:#ffffff;border-top:1px solid #eef0f3;"></div>
<div class="a" style="left:419.5px;top:710.20px;width:1px;height:30.90px;background:#eef0f4;"></div>
<div class="a" style="left:546.7px;top:710.20px;width:1px;height:30.90px;background:#eef0f4;"></div>
<div class="a" style="left:668px;top:710.20px;width:1px;height:30.90px;background:#eef0f4;"></div>
<div class="a" style="left:798px;top:710.20px;width:1px;height:30.90px;background:#eef0f4;"></div>
<div class="a" style="left:907.3px;top:710.20px;width:1px;height:30.90px;background:#eef0f4;"></div>
<div class="a" style="left:1019.4px;top:710.20px;width:1px;height:30.90px;background:#eef0f4;"></div>
<div class="a" style="left:303.5px;top:720.29px;font-size:11px;line-height:12px;letter-spacing:0.55px;color:#1c1c1c;font-weight:normal;">Backup Operators</div>
<div class="a" style="left:424.0px;top:720.29px;font-size:11px;line-height:12px;letter-spacing:0.75px;color:#1c1c1c;font-weight:normal;">Administrator</div>
<div class="a" style="left:551.2px;top:714.44px;font-size:11px;line-height:12px;letter-spacing:0.95px;color:#1c1c1c;font-weight:normal;">Apr 07,2014</div>
<div class="a" style="left:551.2px;top:726.14px;font-size:11px;line-height:12px;letter-spacing:0.95px;color:#1c1c1c;font-weight:normal;">05:31:17 PM</div>
<div class="a" style="left:672.5px;top:720.29px;font-size:11px;line-height:12px;letter-spacing:0.9px;color:#1c1c1c;font-weight:normal;">admp-dc1</div>
<div class="a" style="left:802.5px;top:720.29px;font-size:11px;line-height:12px;letter-spacing:0.55px;color:#1c1c1c;font-weight:normal;">Group Modified</div>
<div class="a" style="left:911.8px;top:720.29px;font-size:11px;line-height:12px;letter-spacing:0.45px;color:#1c1c1c;font-weight:normal;">ADMP</div>
<div class="a" style="left:1023.9px;top:714.44px;font-size:11px;line-height:12px;letter-spacing:0.55px;color:#1c1c1c;font-weight:normal;">Group &#39;Backup Operators&#39; was modified by</div>
<div class="a" style="left:1023.9px;top:726.14px;font-size:11px;line-height:12px;letter-spacing:0.55px;color:#1c1c1c;font-weight:normal;">&#39;ADMP\Administrator&#39;Modified Properties : member</div>
<div class="a" style="left:299px;top:741.10px;width:1016px;height:54.80px;background:#fafafa;border-top:1px solid #eef0f3;"></div>
<div class="a" style="left:419.5px;top:741.10px;width:1px;height:54.80px;background:#eef0f4;"></div>
<div class="a" style="left:546.7px;top:741.10px;width:1px;height:54.80px;background:#eef0f4;"></div>
<div class="a" style="left:668px;top:741.10px;width:1px;height:54.80px;background:#eef0f4;"></div>
<div class="a" style="left:798px;top:741.10px;width:1px;height:54.80px;background:#eef0f4;"></div>
<div class="a" style="left:907.3px;top:741.10px;width:1px;height:54.80px;background:#eef0f4;"></div>
<div class="a" style="left:1019.4px;top:741.10px;width:1px;height:54.80px;background:#eef0f4;"></div>
<div class="a" style="left:303.5px;top:763.14px;font-size:11px;line-height:12px;letter-spacing:0.55px;color:#1c1c1c;font-weight:normal;">Account Operators</div>
<div class="a" style="left:424.0px;top:763.14px;font-size:11px;line-height:12px;letter-spacing:0.75px;color:#1c1c1c;font-weight:normal;">Administrator</div>
<div class="a" style="left:551.2px;top:757.29px;font-size:11px;line-height:12px;letter-spacing:0.95px;color:#1c1c1c;font-weight:normal;">Apr 07,2014</div>
<div class="a" style="left:551.2px;top:768.99px;font-size:11px;line-height:12px;letter-spacing:0.95px;color:#1c1c1c;font-weight:normal;">05:31:17 PM</div>
<div class="a" style="left:672.5px;top:763.14px;font-size:11px;line-height:12px;letter-spacing:0.9px;color:#1c1c1c;font-weight:normal;">admp-dc1</div>
<div class="a" style="left:802.5px;top:751.44px;font-size:11px;line-height:12px;letter-spacing:0.55px;color:#1c1c1c;font-weight:normal;">Security Enabled</div>
<div class="a" style="left:802.5px;top:763.14px;font-size:11px;line-height:12px;letter-spacing:0.55px;color:#1c1c1c;font-weight:normal;">Local Group</div>
<div class="a" style="left:802.5px;top:774.84px;font-size:11px;line-height:12px;letter-spacing:0.55px;color:#1c1c1c;font-weight:normal;">Member Added</div>
<div class="a" style="left:911.8px;top:763.14px;font-size:11px;line-height:12px;letter-spacing:0.45px;color:#1c1c1c;font-weight:normal;">admp.com</div>
<div class="a" style="left:1023.9px;top:745.59px;font-size:11px;line-height:12px;letter-spacing:0.55px;color:#1c1c1c;font-weight:normal;">Member</div>
<div class="a" style="left:1023.9px;top:757.29px;font-size:11px;line-height:12px;letter-spacing:0.55px;color:#1c1c1c;font-weight:normal;">&#39;CN=o365t1,OU=praveen1465,DC=admp,DC=com&#39;</div>
<div class="a" style="left:1023.9px;top:768.99px;font-size:11px;line-height:12px;letter-spacing:0.55px;color:#1c1c1c;font-weight:normal;">was added to Domain Local Security Group &#39;Account</div>
<div class="a" style="left:1023.9px;top:780.69px;font-size:11px;line-height:12px;letter-spacing:0.55px;color:#1c1c1c;font-weight:normal;">Operators&#39; by &#39;ADMP\Administrator&#39;.</div>
<div class="a" style="left:299px;top:795.90px;width:1016px;height:43.40px;background:#ffffff;border-top:1px solid #eef0f3;"></div>
<div class="a" style="left:419.5px;top:795.90px;width:1px;height:43.40px;background:#eef0f4;"></div>
<div class="a" style="left:546.7px;top:795.90px;width:1px;height:43.40px;background:#eef0f4;"></div>
<div class="a" style="left:668px;top:795.90px;width:1px;height:43.40px;background:#eef0f4;"></div>
<div class="a" style="left:798px;top:795.90px;width:1px;height:43.40px;background:#eef0f4;"></div>
<div class="a" style="left:907.3px;top:795.90px;width:1px;height:43.40px;background:#eef0f4;"></div>
<div class="a" style="left:1019.4px;top:795.90px;width:1px;height:43.40px;background:#eef0f4;"></div>
<div class="a" style="left:303.5px;top:806.39px;font-size:11px;line-height:12px;letter-spacing:0.55px;color:#1c1c1c;font-weight:normal;">$K72000-</div>
<div class="a" style="left:303.5px;top:818.09px;font-size:11px;line-height:12px;letter-spacing:0.55px;color:#1c1c1c;font-weight:normal;">H64CFIF7TUCG</div>
<div class="a" style="left:424.0px;top:812.24px;font-size:11px;line-height:12px;letter-spacing:0.75px;color:#1c1c1c;font-weight:normal;">Administrator</div>
<div class="a" style="left:551.2px;top:806.39px;font-size:11px;line-height:12px;letter-spacing:0.95px;color:#1c1c1c;font-weight:normal;">Apr 04,2014</div>
<div class="a" style="left:551.2px;top:818.09px;font-size:11px;line-height:12px;letter-spacing:0.95px;color:#1c1c1c;font-weight:normal;">06:00:01 PM</div>
<div class="a" style="left:672.5px;top:812.24px;font-size:11px;line-height:12px;letter-spacing:0.9px;color:#1c1c1c;font-weight:normal;">admp-dc1</div>
<div class="a" style="left:802.5px;top:800.54px;font-size:11px;line-height:12px;letter-spacing:0.55px;color:#1c1c1c;font-weight:normal;">Security Disabled</div>
<div class="a" style="left:802.5px;top:812.24px;font-size:11px;line-height:12px;letter-spacing:0.55px;color:#1c1c1c;font-weight:normal;">Global Group</div>
<div class="a" style="left:802.5px;top:823.94px;font-size:11px;line-height:12px;letter-spacing:0.55px;color:#1c1c1c;font-weight:normal;">Deleted</div>
<div class="a" style="left:911.8px;top:812.24px;font-size:11px;line-height:12px;letter-spacing:0.45px;color:#1c1c1c;font-weight:normal;">ADMP</div>
<div class="a" style="left:1023.9px;top:806.39px;font-size:11px;line-height:12px;letter-spacing:0.55px;color:#1c1c1c;font-weight:normal;">Global Distribution Group &#39;$K72000-H64CFIF7TUCG&#39;</div>
<div class="a" style="left:1023.9px;top:818.09px;font-size:11px;line-height:12px;letter-spacing:0.55px;color:#1c1c1c;font-weight:normal;">was deleted by &#39;ADMP\Administrator&#39;.</div>
<div class="a" style="left:299px;top:839.30px;width:1016px;height:43.40px;background:#fafafa;border-top:1px solid #eef0f3;"></div>
<div class="a" style="left:419.5px;top:839.30px;width:1px;height:43.40px;background:#eef0f4;"></div>
<div class="a" style="left:546.7px;top:839.30px;width:1px;height:43.40px;background:#eef0f4;"></div>
<div class="a" style="left:668px;top:839.30px;width:1px;height:43.40px;background:#eef0f4;"></div>
<div class="a" style="left:798px;top:839.30px;width:1px;height:43.40px;background:#eef0f4;"></div>
<div class="a" style="left:907.3px;top:839.30px;width:1px;height:43.40px;background:#eef0f4;"></div>
<div class="a" style="left:1019.4px;top:839.30px;width:1px;height:43.40px;background:#eef0f4;"></div>
<div class="a" style="left:303.5px;top:849.79px;font-size:11px;line-height:12px;letter-spacing:0.55px;color:#1c1c1c;font-weight:normal;">$J72000-</div>
<div class="a" style="left:303.5px;top:861.49px;font-size:11px;line-height:12px;letter-spacing:0.55px;color:#1c1c1c;font-weight:normal;">ABCDEFGH1234</div>
<div class="a" style="left:424.0px;top:855.64px;font-size:11px;line-height:12px;letter-spacing:0.75px;color:#1c1c1c;font-weight:normal;">Administrator</div>
<div class="a" style="left:551.2px;top:849.79px;font-size:11px;line-height:12px;letter-spacing:0.95px;color:#1c1c1c;font-weight:normal;">Apr 04,2014</div>
<div class="a" style="left:551.2px;top:861.49px;font-size:11px;line-height:12px;letter-spacing:0.95px;color:#1c1c1c;font-weight:normal;">06:00:01 PM</div>
<div class="a" style="left:672.5px;top:855.64px;font-size:11px;line-height:12px;letter-spacing:0.9px;color:#1c1c1c;font-weight:normal;">admp-dc1</div>
<div class="a" style="left:802.5px;top:843.94px;font-size:11px;line-height:12px;letter-spacing:0.55px;color:#1c1c1c;font-weight:normal;">Security Disabled</div>
<div class="a" style="left:802.5px;top:855.64px;font-size:11px;line-height:12px;letter-spacing:0.55px;color:#1c1c1c;font-weight:normal;">Global Group</div>
<div class="a" style="left:802.5px;top:867.34px;font-size:11px;line-height:12px;letter-spacing:0.55px;color:#1c1c1c;font-weight:normal;">Deleted</div>
<div class="a" style="left:911.8px;top:855.64px;font-size:11px;line-height:12px;letter-spacing:0.45px;color:#1c1c1c;font-weight:normal;">ADMP</div>
<div class="a" style="left:1023.9px;top:849.79px;font-size:11px;line-height:12px;letter-spacing:0.55px;color:#1c1c1c;font-weight:normal;">Global Distribution Group &#39;$J72000-ABCDEFGH1234&#39;</div>
<div class="a" style="left:1023.9px;top:861.49px;font-size:11px;line-height:12px;letter-spacing:0.55px;color:#1c1c1c;font-weight:normal;">was deleted by &#39;ADMP\Administrator&#39;.</div>
</body></html>
